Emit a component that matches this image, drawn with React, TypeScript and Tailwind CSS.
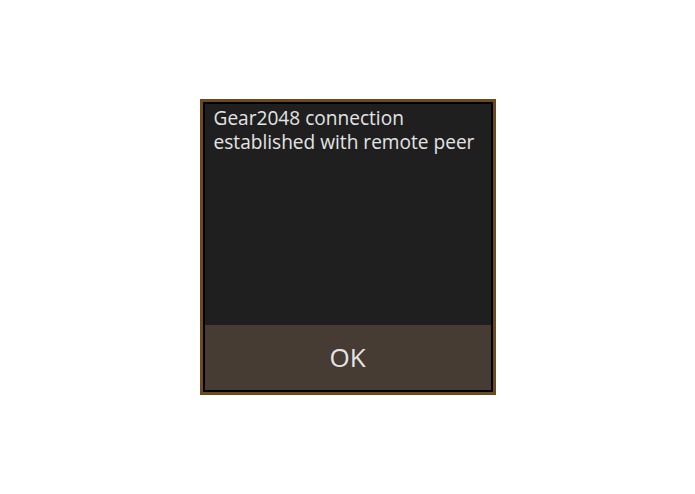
import React from 'react';

const App: React.FC = () => {
  return (
    <div className="h-screen w-full bg-white flex items-center justify-center" style={{ fontFamily: '"Open Sans", sans-serif' }}>
      <div className="w-[296px] h-[296px] border-[3px] border-[#6c4a1d]">
        <div className="w-full h-full border-2 border-black bg-[#1f1f1f] flex flex-col">
          <div className="flex-1 px-[9px] pt-[2px] text-[19.1px] leading-[24px] text-[#e4e4e4]">
            Gear2048 connection established with remote peer
          </div>
          <button className="h-[65px] bg-[#463c33] text-[#e4e4e4] text-[26px] flex items-center justify-center">
            OK
          </button>
        </div>
      </div>
    </div>
  );
};

export default App;
